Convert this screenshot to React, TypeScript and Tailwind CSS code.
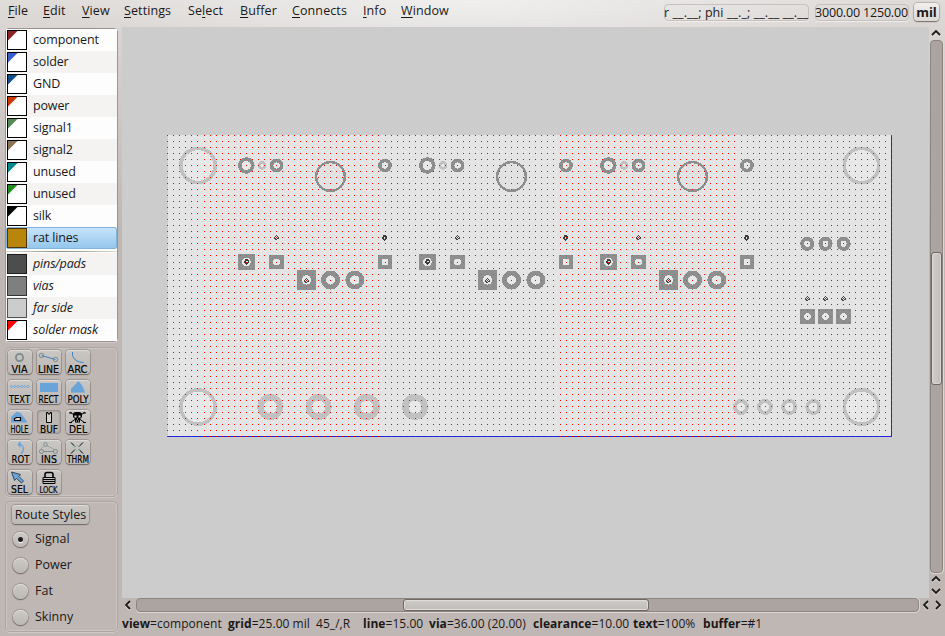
import React from "react";

const FONT = "font-['Open_Sans','Noto_Sans',sans-serif]";

const menus = [
  { pre: "", key: "F", post: "ile", w: "w-[35px]" },
  { pre: "", key: "E", post: "dit", w: "w-[39px]" },
  { pre: "", key: "V", post: "iew", w: "w-[42px]" },
  { pre: "", key: "S", post: "ettings", w: "w-[64px]" },
  { pre: "Se", key: "l", post: "ect", w: "w-[52px]" },
  { pre: "", key: "B", post: "uffer", w: "w-[52px]" },
  { pre: "", key: "C", post: "onnects", w: "w-[71px]" },
  { pre: "", key: "I", post: "nfo", w: "w-[38px]" },
  { pre: "", key: "W", post: "indow", w: "w-[60px]" },
];

const layers = [
  { name: "component", color: "#8b2323" },
  { name: "solder", color: "#3a5fcd" },
  { name: "GND", color: "#104e8b" },
  { name: "power", color: "#cd3700" },
  { name: "signal1", color: "#548b54" },
  { name: "signal2", color: "#8b7355" },
  { name: "unused", color: "#00868b" },
  { name: "unused", color: "#228b22" },
  { name: "silk", color: "#000000" },
  { name: "rat lines", color: "#b8860b", full: true, selected: true },
];

const extras = [
  { name: "pins/pads", color: "#4d4d4d", full: true },
  { name: "vias", color: "#7f7f7f", full: true },
  { name: "far side", color: "#cccccc", full: true },
  { name: "solder mask", color: "#ff0000" },
];

type Layer = { name: string; color: string; full?: boolean; selected?: boolean };

function LayerRow({ layer, odd, italic }: { layer: Layer; odd: boolean; italic?: boolean }) {
  const bg = layer.selected
    ? "rounded-[3px] bg-linear-to-b from-[#c9e6fb] to-[#92c5ec] shadow-[inset_0_0_0_1px_#86b4d8]"
    : odd
      ? "bg-[#f4f3f2]"
      : "bg-[#fdfdfd]";
  return (
    <div className={`flex h-[22px] items-center pl-px ${bg}`}>
      <svg width="20" height="20" viewBox="0 0 20 20" className="shrink-0">
        <rect width="20" height="20" fill={layer.full ? layer.color : "#fff"} />
        {!layer.full && <path d="M0 0H11.5L0 11.5Z" fill={layer.color} />}
        <rect x=".5" y=".5" width="19" height="19" fill="none" stroke="#000" strokeOpacity={layer.full ? 0.6 : 1} />
      </svg>
      <span className={`ml-[6px] leading-[20px] whitespace-nowrap tracking-[-0.15px] ${italic ? "italic" : ""}`}>{layer.name}</span>
    </div>
  );
}

const B = "#69a3d8";
const G = "#7d8a8a";

const tools: { label: string; x: number; w: number; active?: boolean; art: React.ReactNode }[] = [
  { label: "VIA", x: 3.5, w: 16, art: <circle cx="11.5" cy="7.5" r="3.6" fill="none" stroke={G} strokeWidth="1.7" /> },
  {
    label: "LINE", x: 1, w: 21,
    art: (
      <g fill="none">
        <circle cx="4.5" cy="5.5" r="2.2" stroke={G} />
        <circle cx="18.5" cy="9.5" r="2.2" stroke={G} />
        <path d="M4.5 5.5L18.5 9.5" stroke="#3d82c6" />
      </g>
    ),
  },
  { label: "ARC", x: 1.5, w: 20, art: <path d="M6.5 2V5.5Q8.5 12 17.5 12.5" fill="none" stroke="#3d82c6" /> },
  {
    label: "TEXT", x: 1, w: 21,
    art: (
      <g fill="none" stroke={B}>
        {[3.5, 6.8, 10.1, 13.4, 16.7, 20].map((x) => (
          <path key={x} d={`M${x - 1.3} 6.5l1.3-1.3l1.3 1.3l-1.3 1.3z`} />
        ))}
      </g>
    ),
  },
  { label: "RECT", x: 1.5, w: 20, art: <rect x="3" y="3" width="18" height="9" fill={B} /> },
  { label: "POLY", x: 1.5, w: 21, art: <path d="M12.5 1L16.5 6L19 12.5H5V9Z" fill={B} /> },
  {
    label: "HOLE", x: 2.5, w: 18,
    art: (
      <g>
        <path d="M9 1.5L13 3.5L19.5 12.5H3V7Z" fill={B} />
        <path d="M6.5 10.5V8.5L8.5 7.5H12.5V10.5Z" fill="#ddd" stroke="#000" strokeWidth="1.2" />
      </g>
    ),
  },
  { label: "BUF", x: 3, w: 18, active: true, art: <path d="M9.5 2.5H11V4H13V2.5H14.5V12.5H9.5Z" fill="#d3d0cd" stroke="#000" /> },
  {
    label: "DEL", x: 3, w: 18,
    art: (
      <g>
        <path d="M4 2L19 13M19 2L4 13M3 3H6M17 3H20M3 12.5H6M17 12.5H20" stroke="#000" fill="none" />
        <path d="M7 3.5L9 2H14L16 3.5V7L14 9V12.5H9V9L7 7Z" fill="#000" />
        <path d="M8.5 5.5h2v2h-2zM12.5 5.5h2v2h-2zM11 8.5h1v1h-1zM10 10.5h1v1h-1zM12 10.5h1v1h-1z" fill="#ddd" />
      </g>
    ),
  },
  {
    label: "ROT", x: 3.5, w: 18,
    art: (
      <g fill="none" stroke={B}>
        <path d="M11 4.5H13Q15.5 6 15.5 9Q15.5 12 13 13.5" strokeWidth="1.4" />
        <path d="M12.5 2L10.5 4.5L12.5 7" strokeWidth="1.6" />
      </g>
    ),
  },
  {
    label: "INS", x: 4, w: 16,
    art: (
      <g fill="none" stroke={G}>
        <circle cx="8.5" cy="4.5" r="1.8" />
        <circle cx="4.5" cy="11.5" r="2" />
        <circle cx="18.5" cy="11.5" r="2" />
        <path d="M6.5 11.5H16.5" />
        <path d="M4.5 8.5L7 6M10.5 6L18 10" strokeDasharray="1.5 1.5" />
      </g>
    ),
  },
  {
    label: "THRM", x: 1, w: 22,
    art: (
      <g fill="none">
        <path d="M5 2.5L9 6.5M17 2.5L13 6.5M5 13.5L9 9.5M17 13.5L13 9.5" stroke="#000" />
        <path d="M8 5.5h6v5h-6z" stroke="#5fc99b" strokeWidth=".8" strokeDasharray="1 1.8" />
      </g>
    ),
  },
  { label: "SEL", x: 3, w: 17, art: <path d="M3.5 2L12.5 4.5L11 6.5L15.5 11L13.5 13L8.5 8.5L6.5 10.5Z" fill={B} stroke="#1f2d3a" strokeWidth=".8" /> },
  {
    label: "LOCK", x: 2.5, w: 18,
    art: (
      <g fill="none" stroke="#000">
        <path d="M8 7V4.5Q8 2.5 10 2.5H14Q16 2.5 16 4.5V7" strokeWidth="1.6" />
        <path d="M6 7.5H18V13.5H6ZM6 9.5H18M6 11.5H18" />
      </g>
    ),
  },
];

function ToolButton({ tool }: { tool: (typeof tools)[number] }) {
  const face = tool.active
    ? "bg-[#bcb7b3] shadow-[inset_0_0_2px_1px_#8d8682]"
    : "bg-linear-to-b from-[#c9c6c4] to-[#bcb8b5] shadow-[inset_0_1px_0_#dedcda,0_1px_1px_#6f6966,0_0_1px_1px_#9d9592]";
  return (
    <button className={`h-6 w-6 rounded-[4px] ${face}`}>
      <svg width="24" height="24" viewBox="0 0 24 24" className="overflow-visible">
        {tool.art}
        <text x={tool.x} y="22.5" textLength={tool.w} lengthAdjust="spacingAndGlyphs" fontFamily="'DejaVu Sans'" fontSize={tool.label === "LOCK" ? 9.5 : 10.8} fill="#000" stroke="#000" strokeWidth=".2">
          {tool.label}
        </text>
      </svg>
    </button>
  );
}

const DARK = "#8f8f8f";
const LIGHT = "#c1c1c1";
const groups = [0, 181, 362];

type Ring = { x: number; y: number; ro: number; ri: number };
type Pad = { x: number; y: number; w: number; h: number; r: number; mark?: number };

const darkRings: Ring[] = [
  ...groups.flatMap((g) => [
    { x: 246.3 + g, y: 165.5, ro: 8.3, ri: 4.6 },
    { x: 276.6 + g, y: 165.5, ro: 6.9, ri: 3.1 },
    { x: 385 + g, y: 165.5, ro: 6.9, ri: 3.1 },
    { x: 330.5 + g, y: 176.5, ro: 15.6, ri: 13.1 },
    { x: 330.5 + g, y: 280, ro: 9.5, ri: 4.6 },
    { x: 354.8 + g, y: 280, ro: 9.5, ri: 4.6 },
  ]),
  ...[807.3, 825.5, 843.6].map((x) => ({ x, y: 243.8, ro: 7.1, ri: 3 })),
];

const lightRings: Ring[] = [
  ...[165.5, 407].flatMap((y) => [198, 861.5].map((x) => ({ x, y, ro: 19, ri: 15.3 }))),
  ...groups.map((g) => ({ x: 262 + g, y: 165.5, ro: 4.3, ri: 1.8 })),
  ...[270.3, 318.6, 366.8, 415].map((x) => ({ x, y: 407, ro: 13, ri: 6.5 })),
  ...[741, 765, 789.2, 813.3].map((x) => ({ x, y: 407, ro: 8, ri: 4.3 })),
];

const pads: Pad[] = [
  ...groups.flatMap((g) => [
    { x: 238 + g, y: 254, w: 17, h: 16, r: 4.3, mark: 2 },
    { x: 269 + g, y: 255, w: 15, h: 14, r: 3.4 },
    { x: 297 + g, y: 270, w: 19, h: 20, r: 4.7, mark: 1 },
    { x: 378 + g, y: 255, w: 14, h: 14, r: 3.4 },
  ]),
  ...[800, 818, 836].map((x) => ({ x, y: 309, w: 15, h: 15, r: 3.4 })),
];

const marks = [
  ...groups.flatMap((g) => [
    { x: 276 + g, y: 237, heavy: false },
    { x: 384 + g, y: 237, heavy: true },
  ]),
  ...[807, 825, 843].map((x) => ({ x, y: 298, heavy: false })),
];

function overDark(x: number, y: number) {
  const px = x + 0.5;
  const py = y + 0.5;
  return (
    darkRings.some((c) => {
      const d = Math.hypot(px - c.x, py - c.y);
      return d < c.ro && d > c.ri;
    }) ||
    pads.some(
      (p) =>
        px > p.x && px < p.x + p.w && py > p.y && py < p.y + p.h &&
        Math.hypot(px - p.x - p.w / 2, py - p.y - p.h / 2) > p.r,
    )
  );
}

// Grid pitch in screen pixels: 25 mil at the current zoom.
const PITCH = 6.0338;
let redDots = "";
let grayDots = "";
for (let j = 0; j <= 50; j++) {
  for (let i = 0; i <= 120; i++) {
    const x = Math.floor(167.805 + i * PITCH);
    const y = Math.floor(135.3 + j * PITCH);
    const cell = `M${x} ${y}h1v1h-1z`;
    if (overDark(x, y)) grayDots += cell;
    else redDots += cell;
  }
}

function RingShape({ c, color, fill }: { c: Ring; color: string; fill: string }) {
  return <circle cx={c.x} cy={c.y} r={(c.ro + c.ri) / 2} strokeWidth={c.ro - c.ri} stroke={color} fill={fill} />;
}

const thinCells = [[0, -2], [-1, -1], [1, -1], [-2, 0], [2, 0], [-2, 1], [2, 1], [-1, 1], [1, 1], [0, 2], [-1, 2]];
const heavyCells = [[-1, -2], [0, -2], [1, -2], [-1, -1], [0, -1], [1, -1], [2, -1], [-2, 0], [-1, 0], [2, 0], [-2, 1], [-1, 1], [1, 1], [2, 1], [-1, 2], [0, 2], [1, 2], [0, 3]];

function Mark({ x, y, heavy }: { x: number; y: number; heavy: boolean }) {
  const d = (heavy ? heavyCells : thinCells).map(([dx, dy]) => `M${x + dx} ${y + dy}h1v1h-1z`).join("");
  return <path d={d} fill={heavy ? "#3a3a3a" : "#444"} />;
}

function Board() {
  return (
    <svg width="807" height="571" viewBox="122 27 807 571" shapeRendering="crispEdges" className="block">
      <rect x="168" y="135" width="723" height="301" fill="#e4e4e4" />
      {lightRings.map((c, i) => <RingShape key={i} c={c} color={LIGHT} fill="#e8e8e8" />)}
      {darkRings.map((c, i) => <RingShape key={i} c={c} color={DARK} fill={c.ro > 15 ? "#e2e2e2" : "#e8e8e8"} />)}
      {pads.map((p, i) => (
        <g key={i}>
          <rect x={p.x} y={p.y} width={p.w} height={p.h} fill={DARK} />
          <circle cx={p.x + p.w / 2} cy={p.y + p.h / 2} r={p.r} fill="#e8e8e8" />
        </g>
      ))}
      <path d="M167 436h725v1h-725zM891 135h1v302h-1z" fill="#2020dd" />
      {pads.filter((p) => p.mark).map((p, i) => (
        <Mark key={i} x={Math.floor(p.x + p.w / 2)} y={Math.floor(p.y + p.h / 2) - (p.mark === 2 ? 1 : 0)} heavy={p.mark === 2} />
      ))}
      {marks.map((m, i) => <Mark key={i} {...m} />)}
      <path d={redDots} fill="#ff0000" />
      <path d={grayDots} fill="#767676" />
    </svg>
  );
}

function Arrow({ d }: { d: string }) {
  return (
    <svg width="12" height="12" viewBox="0 0 12 12" className="shrink-0">
      <path d={d} transform="translate(0 1)" fill="none" stroke="#e6e3e1" strokeWidth="1.8" />
      <path d={d} fill="none" stroke="#1e1c1b" strokeWidth="1.8" />
    </svg>
  );
}
const UP = "M2 8L6 4L10 8";
const DOWN = "M2 4L6 8L10 4";
const LEFT = "M8 2L4 6L8 10";
const RIGHT = "M4 2L8 6L4 10";

const FRAME = "rounded-[5px] border border-[#aea6a2] shadow-[inset_0_0_0_1px_#cbc5c2,0_1px_0_#d0cac7]";

const status = [
  { k: "view", v: "component", w: "w-[106px]" },
  { k: "grid", v: "25.00 mil", w: "w-[88px]" },
  { k: "", v: "45_/,R", w: "w-[47px]" },
  { k: "line", v: "15.00", w: "w-[66px]" },
  { k: "via", v: "36.00 (20.00)", w: "w-[104px]" },
  { k: "clearance", v: "10.00", w: "w-[100px]" },
  { k: "text", v: "100%", w: "w-[70px]" },
  { k: "buffer", v: "#1", w: "w-[70px]" },
];

export default function App() {
  return (
    <div className={`flex h-[636px] w-[945px] flex-col overflow-hidden bg-[radial-gradient(ellipse_420px_70px_at_472px_0px,#f0efee,transparent),linear-gradient(to_bottom,#dfdcda_0px,#d9d5d3_28px,#bfb7b4_230px)] text-[12.5px] text-[#1b1918] ${FONT}`}>
      <header className="flex h-[27px] shrink-0 items-start">
        <nav className="flex flex-1 pl-2">
          {menus.map((m) => (
            <span key={m.pre + m.key} className={`${m.w} shrink-0 leading-[21px] tracking-[0.1px] whitespace-nowrap`}>
              {m.pre}
              <span className="underline decoration-1 underline-offset-2">{m.key}</span>
              {m.post}
            </span>
          ))}
        </nav>
        <div className="mt-1 mr-[6px] h-[17px] w-[145px] shrink-0 rounded-[4px] border border-[#c6c1be] leading-[15px] tracking-[0.09px] whitespace-nowrap shadow-[0_1px_0_#efedec]"><span className="-ml-px">r __.__; phi __._; __.__ __.__</span></div>
        <div className="mt-1 mr-[5px] h-[17px] w-[94px] shrink-0 rounded-[4px] border border-[#c6c1be] leading-[15px] tracking-[-0.18px] whitespace-nowrap shadow-[0_1px_0_#efedec]"><span className="-ml-px">3000.00 1250.00</span></div>
        <button className="mt-[3px] mr-[6px] h-[18px] w-[25px] shrink-0 rounded-[4px] bg-linear-to-b from-[#f1f0ef] to-[#dcd9d7] text-center text-[13px] leading-[18px] font-bold shadow-[0_1px_1px_#77706c,0_0_1px_1px_#b7b1ad]">mil</button>
      </header>

      <div className="flex min-h-0 flex-1">
        <aside className="flex w-[122px] shrink-0 flex-col pt-px pl-[5px]">
          <div className="h-[314px] w-[113px] rounded-[4px] border border-[#9b9490] bg-[#fdfdfd] shadow-[0_1px_0_#d0cac7]">
            {layers.map((l, i) => <LayerRow key={i} layer={l} odd={i % 2 === 1} />)}
            <div className="flex h-1 items-center">
              <div className="h-px w-full bg-linear-to-r from-[#dddbd9] via-[#8f8b86] to-[#dddbd9]" />
            </div>
            {extras.map((l, i) => <LayerRow key={i} layer={l} odd={i % 2 === 0} italic />)}
          </div>

          <div className={`mt-[5px] h-[150px] w-[113px] pt-[2px] pl-[2px] ${FRAME}`}>
            <div className="grid grid-cols-[24px_24px_24px] gap-x-[5px] gap-y-[6px]">
              {tools.map((t) => <ToolButton key={t.label} tool={t} />)}
            </div>
          </div>

          <div className={`mt-1 h-[131px] w-[113px] pt-[3px] pl-[6px] ${FRAME}`}>
            <button className="block h-[19px] w-[77px] rounded-[4px] bg-linear-to-b from-[#cac7c5] to-[#bdb9b6] text-center leading-[20px] whitespace-nowrap shadow-[inset_0_1px_0_#dedcda,0_1px_1px_#6f6966,0_0_1px_1px_#9d9592]">Route Styles</button>
            <div className="mt-[2px] flex flex-col">
              {["Signal", "Power", "Fat", "Skinny"].map((s, i) => (
                <label key={s} className="flex h-[26px] items-center">
                  <span className="mt-px ml-px flex h-[15px] w-[15px] items-center justify-center rounded-full bg-linear-to-b from-[#cbc8c6] to-[#bcb8b5] shadow-[inset_0_1px_0_#dedcda,0_1px_1px_#6f6966,0_0_1px_1px_#9d9592]">
                    {i === 0 && <span className="h-[5px] w-[5px] rounded-full bg-[#1b1918] shadow-[0_1px_1px_#fff]" />}
                  </span>
                  <span className="ml-[7px]">{s}</span>
                </label>
              ))}
            </div>
          </div>
        </aside>

        <main className="flex min-w-0 flex-1 flex-col">
          <div className="flex h-[571px] shrink-0">
            <div className="h-[571px] w-[807px] shrink-0 bg-[#cccccc]"><Board /></div>
            <div className="flex w-4 flex-col items-start pl-px">
              <div className="h-[13px]"><Arrow d={UP} /></div>
              <div className="h-[533px] w-[13px] rounded-[4px] border border-[#8c8480] bg-[#aca4a0] pt-[211px] shadow-[0_1px_0_#dcd8d6,1px_0_0_#dcd8d6]">
                <div className="h-[133px] w-[11px] rounded-[3px] border border-[#6e6764] bg-linear-to-r from-[#d2cfcd] to-[#bfbbb8] shadow-[inset_0_0_0_1px_#d9d6d4]" />
              </div>
              <Arrow d={UP} />
              <Arrow d={DOWN} />
            </div>
          </div>
          <div className="flex h-[15px] items-start">
            <div className="mt-px w-[14px]"><Arrow d={LEFT} /></div>
            <div className="h-[14px] w-[783px] rounded-[4px] border border-[#8c8480] bg-[#aca4a0] pl-[266px] shadow-[0_1px_0_#dcd8d6,1px_0_0_#dcd8d6]">
              <div className="h-[12px] w-[246px] rounded-[3px] border border-[#6e6764] bg-linear-to-b from-[#cecbc8] to-[#bfbbb8] shadow-[inset_0_0_0_1px_#dedbd9]" />
            </div>
            <div className="mt-px ml-px flex"><Arrow d={LEFT} /><Arrow d={RIGHT} /></div>
          </div>
          <footer className="flex h-[22px] items-center text-[12px] tracking-[0.05px] whitespace-nowrap">
            {status.map((s) => (
              <span key={s.k + s.v} className={`${s.w} shrink-0`}>
                {s.k && <><b>{s.k}</b>=</>}
                {s.v}
              </span>
            ))}
          </footer>
        </main>
      </div>
    </div>
  );
}
